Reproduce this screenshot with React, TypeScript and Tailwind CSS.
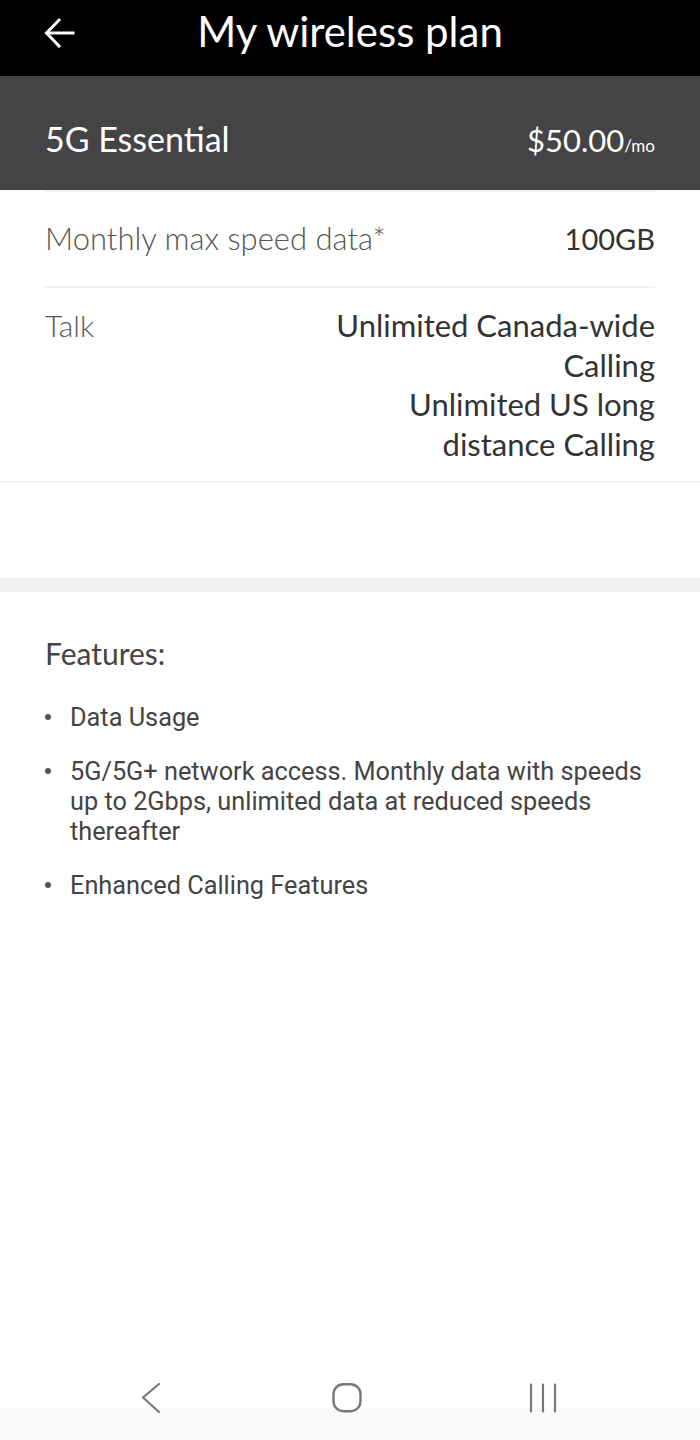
import React from "react";

const avenir = { fontFamily: "Lato, 'Open Sans', sans-serif" };

export default function App() {
  return (
    <div className="min-h-[1440px] flex flex-col bg-white" style={avenir}>
      <header className="h-[76px] bg-black grid grid-cols-[1fr_auto_1fr] items-start">
        <div className="pl-[44px] pt-[17px] flex">
          <svg width="31" height="31" viewBox="0 0 31 31" fill="none" stroke="white" strokeWidth="3" strokeLinecap="square">
            <path d="M3 16H29" />
            <path d="M15 3L2.5 16L15 29" />
          </svg>
        </div>
        <h1 className="text-white text-[42px] leading-none pt-[10px]">My wireless plan</h1>
        <div />
      </header>

      <div className="h-[114px] bg-[#444446] px-[45px] pt-[46px] flex items-baseline justify-between text-white">
        <span className="text-[34px] leading-none">5G Essential</span>
        <span className="text-[31px] leading-none">
          $50.00<span className="text-[17px]">/mo</span>
        </span>
      </div>

      <div className="px-[45px]">
        <div className="border-t-2 border-b-2 border-[#f0f0f0] h-[98px] pt-[31px] flex items-baseline justify-between">
          <span className="text-[31px] leading-none font-light text-[#555]">Monthly max speed data*</span>
          <span className="text-[29px] leading-none text-[#333]">100GB</span>
        </div>
      </div>
      <div className="border-b-2 border-[#f0f0f0]">
        <div className="px-[45px] pt-[18px] pb-[17px] flex justify-between">
          <span className="text-[30px] font-light text-[#555] leading-[39.5px]">Talk</span>
          <div className="text-right text-[31px] text-[#333] leading-[39.5px]">
            <div>Unlimited Canada-wide</div>
            <div>Calling</div>
            <div>Unlimited US long</div>
            <div>distance Calling</div>
          </div>
        </div>
      </div>

      <div className="h-[95px]" />
      <div className="h-[14px] bg-[#efefef]" />

      <section className="px-[45px] pt-[46px]">
        <h2 className="text-[30px] leading-none text-[#444]">Features:</h2>
        <ul className="mt-[35px] flex flex-col gap-[24px] text-[25.3px] leading-[30px] text-[#444]" style={{ fontFamily: "Roboto, sans-serif" }}>
          {[
            "Data Usage",
            "5G/5G+ network access. Monthly data with speeds up to 2Gbps, unlimited data at reduced speeds thereafter",
            "Enhanced Calling Features",
          ].map((t) => (
            <li key={t} className="flex">
              <span className="w-[25px] shrink-0 pt-[10.5px]">
                <span className="block w-[6px] h-[6px] rounded-full bg-[#555]" />
              </span>
              <span>{t}</span>
            </li>
          ))}
        </ul>
      </section>

      <div className="flex-1" />

      <nav className="h-[88px] bg-[linear-gradient(to_bottom,#ffffff_0,#ffffff_56px,#f9f9f9_56px)] flex items-start justify-center gap-[156px] pt-[31px] pr-[6px]">
        <svg width="40" height="30" viewBox="0 0 40 30" fill="none" stroke="#777" strokeWidth="2.2" strokeLinecap="round" strokeLinejoin="round">
          <path d="M28 1L12 14.5L28 29" />
        </svg>
        <svg width="40" height="30" viewBox="0 0 40 30" fill="none" stroke="#777" strokeWidth="2.4">
          <rect x="6.5" y="1.2" width="27" height="27" rx="10" />
        </svg>
        <svg width="40" height="30" viewBox="0 0 40 30" fill="none" stroke="#777" strokeWidth="2.2" strokeLinecap="round">
          <path d="M8 1.5V28.5M20 1.5V28.5M32 1.5V28.5" />
        </svg>
      </nav>
    </div>
  );
}
